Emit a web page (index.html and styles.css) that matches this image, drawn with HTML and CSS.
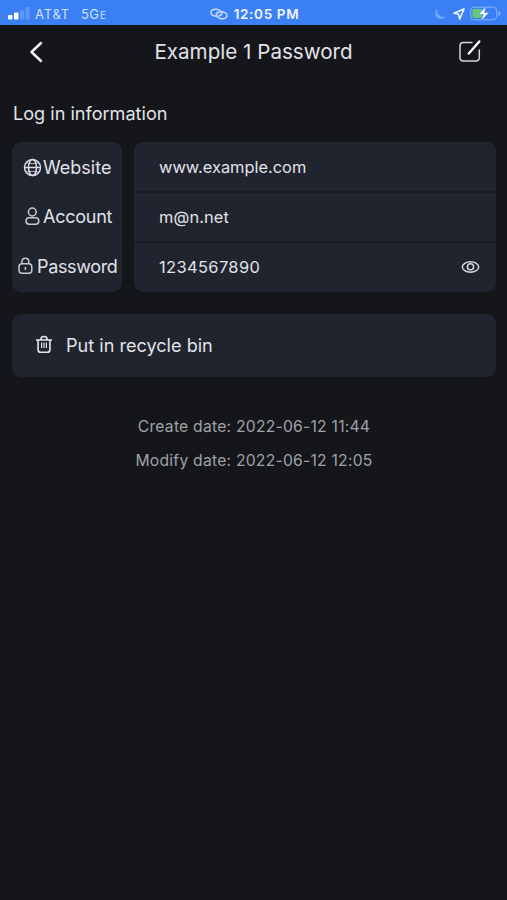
FILE: index.html
```html
<!DOCTYPE html>
<html lang="en">
<head>
<meta charset="utf-8">
<title>Example 1 Password</title>
<link rel="stylesheet" href="styles.css">
</head>
<body>
<header class="status">
  <div class="status-left">
    <svg class="signal" width="22" height="13" viewBox="0 0 22 13"><g fill="#fff"><rect x="0" y="8" width="4.500" height="4.500" rx="1"/><rect x="6" y="5.500" width="4.500" height="7" rx="1"/></g><g fill="#5b97f9"><rect x="12" y="3" width="4" height="9.500" rx="1"/><rect x="17.500" y="0" width="4" height="12.500" rx="1"/></g></svg>
    <span class="carrier">AT&amp;T</span><span class="network">5G<small>E</small></span>
  </div>
  <div class="status-mid">
    <svg width="18" height="12" viewBox="0 0 18 12" fill="none" stroke="#c4dbff" stroke-width="1.500" stroke-linecap="round"><path d="M7.500 8.300C4 8.500 1 7 1 4.700S3 1.300 5.700 1.300s6 1.700 6 4c0 1.500-1.200 2.400-2.700 2.400"/><path d="M10.500 3.700c3.500-.2 6.500 1.300 6.500 3.600s-2 3.400-4.700 3.400-6-1.700-6-4c0-1.500 1.200-2.400 2.700-2.400"/></svg>
    <span class="clock">12:05 PM</span>
  </div>
  <div class="status-right">
    <svg class="moon" width="12" height="12" viewBox="0 0 12 12"><path d="M3.500 .8A5.600 5.600 0 1 0 11.500 8.300C6.500 9.800 2.500 6 3.500 .8Z" fill="#68aafa"/></svg>
    <svg class="arrow" width="12" height="12" viewBox="0 0 12 12"><path d="M11 1 1 5.300 5.700 6.300 6.700 11Z" fill="none" stroke="#f2f7ff" stroke-width="1.600" stroke-linejoin="round"/></svg>
    <svg class="battery" width="31" height="15" viewBox="0 0 31 15"><rect x=".7" y="1.200" width="26" height="12.600" rx="3.500" fill="none" stroke="#84b4fc"/><rect x="2.500" y="3" width="10" height="9" rx="1.800" fill="#67c875"/><path d="M28.500 5v5q2-.8 2-2.500t-2-2.500Z" fill="#84b4fc"/><path d="M16.500 0 8.500 8.500h4.800L11 15l8-8.500h-4.600Z" fill="#fff" stroke="#3a80f4" stroke-width=".5"/></svg>
  </div>
</header>
<nav class="navbar">
  <svg class="back" width="14" height="22" viewBox="0 0 14 22"><path d="M12 2 2.500 11 12 20" fill="none" stroke="#f2f2f5" stroke-width="2.500" stroke-linecap="round" stroke-linejoin="round"/></svg>
  <h1>Example 1 Password</h1>
  <svg class="edit" width="24" height="24" viewBox="0 0 24 24" fill="none" stroke="#d4d4da" stroke-linecap="round"><path d="M14 3.500H5.500Q2 3.500 2 7v11.500Q2 22 5.500 22h12.300q3.500 0 3.500-3.500V11" stroke-width="1.500"/><path d="M10.800 14.500 21.300 2.500" stroke="#fafafc" stroke-width="2.400"/></svg>
</nav>
<main>
  <h2>Log in information</h2>
  <section class="details">
    <div class="card labels">
      <div class="label website"><svg width="19" height="19" viewBox="0 0 19 19" fill="none" stroke="#dadbe4" stroke-width="1.500"><circle cx="9.500" cy="9.500" r="8"/><ellipse cx="9.500" cy="9.500" rx="4" ry="8"/><path d="M1.500 9.500h16"/><path d="M3 4.800q6.500 1.800 13 0M3 14.200q6.500-1.800 13 0" stroke-width=".8"/></svg><span>Website</span></div>
      <div class="label account"><svg width="15" height="19" viewBox="0 0 15 19" fill="none" stroke="#c8cad5" stroke-width="1.500"><circle cx="7.300" cy="5" r="3.900"/><rect x="1" y="10.800" width="12.800" height="6.400" rx="3.200"/></svg><span>Account</span></div>
      <div class="label password"><svg width="15" height="18" viewBox="0 0 15 18" fill="none" stroke="#c8cad5" stroke-width="1.500"><rect x="1" y="6.800" width="12.800" height="9.400" rx="3"/><path d="M4 6.800V4.700Q4 1.300 7.400 1.300t3.400 3.400v2.100M7.400 10v3"/></svg><span>Password</span></div>
    </div>
    <div class="card values">
      <div class="value"><span class="url">www.example.com</span></div>
      <div class="value"><span class="mail">m@n.net</span></div>
      <div class="value"><span class="secret">1234567890</span><svg class="eye" width="19" height="14" viewBox="0 0 19 14" fill="none" stroke="#d5d5de" stroke-width="1.500"><ellipse cx="9.500" cy="7" rx="8.200" ry="5.200"/><circle cx="9.500" cy="6.800" r="3.100"/></svg></div>
    </div>
  </section>
  <div class="card recycle"><svg width="18" height="19" viewBox="0 0 18 19" fill="none" stroke="#e5e6ec" stroke-width="1.600"><path d="M1 5h16M6 4.800V4q0-2.500 3-2.500t3 2.500v.8M3.100 5v9.700q0 2.600 2.600 2.600h6.600q2.600 0 2.600-2.600V5"/><path d="M6.600 7.500v5.500M9 7.500v5.500M11.400 7.500v5.500" stroke-width="1.200"/></svg><span>Put in recycle bin</span></div>
  <div class="dates"><p class="created">Create date: 2022-06-12 11:44</p><p class="modified">Modify date: 2022-06-12 12:05</p></div>
</main>
</body>
</html>
```
FILE: styles.css
```css
* { box-sizing: border-box; }
body { margin: 0; height: 900px; background: #14161a; color: #e2e2e8; font-family: Inter, sans-serif; overflow: hidden; }
svg { display: block; flex: none; }
h1, h2, p { margin: 0; font-weight: 400; white-space: nowrap; }
span { white-space: nowrap; }
.status { height: 25px; background: #3a80f4; display: grid; grid-template-columns: 1fr auto 1fr; align-items: center; padding: 2px 6px 0 8px; color: #cfe1ff; font-size: 13px; }
.status-left, .status-mid, .status-right { display: flex; align-items: center; }
.carrier { margin-left: 5px; letter-spacing: .8px; }
.network { margin-left: 11px; letter-spacing: .2px; }
.network small { font-size: 10px; margin-left: 1px; }
.status-mid { gap: 6px; }
.clock { color: #f2f7ff; font-size: 13.500px; font-weight: 600; letter-spacing: .65px; }
.status-right { justify-content: flex-end; }
.arrow { margin: 0 5px 0 7px; }
.navbar { height: 54px; display: grid; grid-template-columns: 52px 1fr 52px; align-items: center; }
.back { margin-left: 29px; }
.navbar h1 { font-size: 20.600px; line-height: 24px; text-align: center; }
.edit { margin-left: 3px; margin-top: -3px; }
main { padding: 22px 11px 0 12px; }
h2 { font-size: 18.100px; line-height: 24px; margin-left: 1px; }
.details { display: grid; grid-template-columns: 110px 362px; gap: 12px; margin-top: 17px; height: 150px; }
.card { background: #20242f; border-radius: 9px; }
.labels { display: grid; grid-template-rows: 50px 49px 50px; font-size: 18px; }
.label { display: flex; align-items: center; }
.website { padding-left: 11px; }
.website span { margin-left: 1px; }
.account { padding-left: 13px; }
.account span { margin-left: 3px; letter-spacing: -.25px; }
.password { padding-left: 6px; }
.password span { margin-left: 4px; letter-spacing: -.35px; }
.values { display: grid; grid-template-rows: 49px 50px 51px; font-size: 16.400px; }
.value { display: flex; align-items: center; justify-content: space-between; padding: 0 16px 0 25px; }
.value + .value { border-top: 2px solid #191c24; }
.url { padding-top: 1px; }
.mail { letter-spacing: .1px; }
.secret { letter-spacing: .4px; padding-bottom: 2px; }
.eye { margin-top: -1px; }
.recycle { height: 63px; margin-top: 22px; padding-left: 23px; display: flex; align-items: center; gap: 13px; font-size: 18.100px; }
.recycle svg { margin-top: -2px; }
.recycle span { padding-bottom: 2px; }
.dates { margin-top: 33px; text-align: center; font-size: 15.700px; letter-spacing: .23px; line-height: 34px; color: #a1a2a8; }
```
